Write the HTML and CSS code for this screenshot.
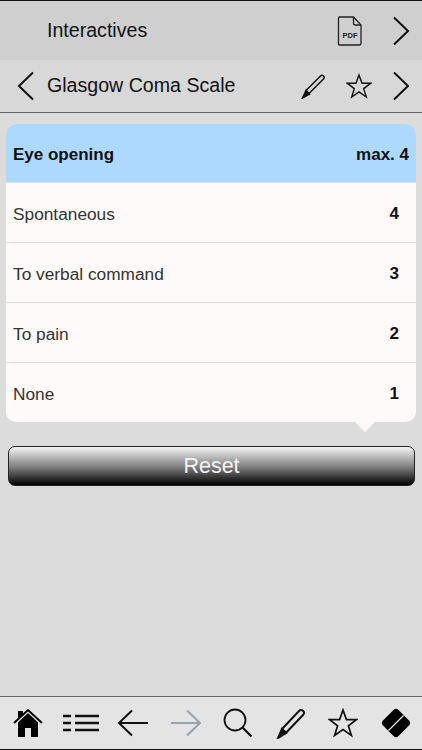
FILE: index.html
```html
<!DOCTYPE html>
<html lang="en">
<head>
  <meta charset="UTF-8">
  <meta name="viewport" content="width=device-width, initial-scale=1.0">
  <title>Glasgow Coma Scale</title>
  <link rel="stylesheet" href="styles.css">
</head>
<body>
  <header class="topbar">
    <div class="bar bar-section">
      <span class="bar-title">Interactives</span>
      <svg class="icon-pdf" width="26" height="30" viewBox="0 0 26 30" fill="none" stroke="#222" stroke-width="1.3">
        <path d="M2.5 1h14l7.500 8v18q0 2-2 2h-19.500q-1 0-1-1v-26q0-1 1-1z"/>
        <path d="M16.500 1v6q0 2 2 2h5.500"/>
        <text class="pdf-label" x="13" y="22" text-anchor="middle">PDF</text>
      </svg>
      <svg class="icon-chevron" width="18" height="30" viewBox="0 0 18 30" fill="none" stroke="#111" stroke-width="2"><path d="M2 1.500l14 13.500l-14 13.500"/></svg>
    </div>
    <div class="bar bar-page">
      <svg class="icon-back" width="18" height="30" viewBox="0 0 18 30" fill="none" stroke="#111" stroke-width="2"><path d="M16 1.500l-14 13.500l14 13.500"/></svg>
      <span class="bar-title page-title">Glasgow Coma Scale</span>
      <svg class="icon-pencil" width="26" height="26" viewBox="0 0 26 26" fill="none" stroke="#111" stroke-width="1.500">
        <path d="M5 17.500l14.500-14.500q1.500-1.500 3 0t0 3l-14.500 14.500z"/>
        <path d="M5 17.500l-3.500 7.500l7-4z" fill="#111"/>
      </svg>
      <svg class="icon-star" width="26" height="26" viewBox="0 0 26 26" fill="none" stroke="#111" stroke-width="1.400"><path d="M13 2l3 8.300h8.700l-7 5.300l2.600 8.400l-7.300-5.100l-7.300 5.100l2.600-8.400l-7-5.300h8.700z"/></svg>
      <svg class="icon-chevron" width="18" height="30" viewBox="0 0 18 30" fill="none" stroke="#111" stroke-width="2"><path d="M2 1.500l14 13.500l-14 13.500"/></svg>
    </div>
  </header>

  <main class="content">
    <section class="score-card">
      <div class="score-head"><span>Eye opening</span><span>max. 4</span></div>
      <div class="score-row"><span>Spontaneous</span><b>4</b></div>
      <div class="score-row"><span>To verbal command</span><b>3</b></div>
      <div class="score-row"><span>To pain</span><b>2</b></div>
      <div class="score-row"><span>None</span><b>1</b></div>
      <div class="score-pointer"></div>
    </section>
    <button class="reset-btn">Reset</button>
  </main>

  <nav class="toolbar">
    <svg width="32" height="32" viewBox="0 0 32 32"><path d="M2 16l14-13l14 13" fill="none" stroke="#000" stroke-width="2"/><path d="M6 4h5v4l-5 5z M16 6l10 9.500v14.500h-7v-9h-6v9h-7v-14.500z" fill="#000"/></svg>
    <svg width="38" height="22" viewBox="0 0 38 22" stroke="#111" stroke-width="2.400"><path d="M1 4h8M13 4h24M1 11h8M13 11h24M1 18h8M13 18h24"/></svg>
    <svg width="32" height="28" viewBox="0 0 32 28" fill="none" stroke="#111" stroke-width="2"><path d="M31 14h-29M15 1.500l-13 12.500l13 12.500"/></svg>
    <svg width="32" height="28" viewBox="0 0 32 28" fill="none" stroke="#9aa3ab" stroke-width="2"><path d="M1 14h29M17 1.500l13 12.500l-13 12.500"/></svg>
    <svg width="30" height="30" viewBox="0 0 30 30" fill="none" stroke="#111" stroke-width="1.800"><circle cx="12" cy="12" r="10.500"/><path d="M19.500 19.500l9 9" stroke-width="2.200"/></svg>
    <svg width="30" height="32" viewBox="0 0 30 32" fill="none" stroke="#111" stroke-width="2"><path d="M6 22l17-18q2-2 4-.200t.2 4l-17.200 18z"/><path d="M6 22l-4 9l8-5z" fill="#111"/></svg>
    <svg width="30" height="30" viewBox="0 0 30 30" fill="none" stroke="#111" stroke-width="1.700"><path d="M15 2l3.400 9.600h10l-8 6.100l3 9.800l-8.400-5.900l-8.400 5.900l3-9.800l-8-6.100h10z"/></svg>
    <svg width="30" height="30" viewBox="0 0 30 30"><path d="M13 1.500q2-1.500 4 0l11.500 11.500q1.500 2 0 4l-11.500 11.500q-2 1.500-4 0l-11.500-11.500q-1.500-2 0-4z" fill="#000"/><path d="M7.500 22.500l15-15" stroke="#e4e4e4" stroke-width="1.200"/></svg>
  </nav>
</body>
</html>
```

FILE: styles.css
```css
html, body {
  height: 100%;
}

body {
  margin: 0;
  height: 750px;
  overflow: hidden;
  display: flex;
  flex-direction: column;
  font-family: "Liberation Sans", Arial, sans-serif;
  background-color: #dcdcdc;
  color: #111;
}

svg {
  display: block;
  flex-shrink: 0;
}

.topbar {
  border-top: 1px solid #111;
  border-bottom: 1px solid #666;
}

.bar {
  display: flex;
  align-items: center;
}

.bar-section {
  height: 59px;
  padding: 0 12px 0 47px;
  background-color: #cfcfcf;
}

.bar-page {
  height: 52px;
  padding: 0 12px 0 17px;
  background-color: #d8d8d8;
}

.bar-title {
  flex: 1;
  font-size: 19.600px;
}

.page-title {
  margin-left: 12px;
  padding-bottom: 2px;
}

.icon-pdf {
  margin-right: 29px;
}

.pdf-label {
  font-family: "Liberation Sans", Arial, sans-serif;
  font-size: 7.500px;
  font-weight: bold;
  fill: #222;
  stroke: none;
}

.icon-pencil {
  margin-right: 19px;
}

.icon-star {
  margin-right: 20px;
}

.content {
  flex: 1;
  padding: 11px 6px 0 6px;
}

.score-card {
  position: relative;
  background-color: #fffafa;
  border-radius: 10px;
}

.score-head {
  display: flex;
  justify-content: space-between;
  align-items: center;
  box-sizing: border-box;
  height: 58px;
  padding: 3px 7px 0;
  background-color: #add8ff;
  border-radius: 10px 10px 0 0;
  font-size: 17px;
  font-weight: bold;
}

.score-row {
  display: flex;
  justify-content: space-between;
  align-items: center;
  height: 56px;
  padding: 3px 17px 0 7px;
  border-top: 1px solid #ddd;
  font-size: 17.300px;
  color: #333;
}

.score-row:last-of-type {
  height: 54px;
}

.score-row b {
  font-size: 17px;
  color: #111;
}

.score-pointer {
  position: absolute;
  right: 40px;
  bottom: -10px;
  width: 0;
  height: 0;
  border-left: 11px solid transparent;
  border-right: 11px solid transparent;
  border-top: 11px solid #fffafa;
}

.reset-btn {
  display: block;
  width: 407px;
  height: 40px;
  margin: 24px 0 0 2px;
  padding: 0;
  border: 1px solid #222;
  border-radius: 7px;
  background: linear-gradient(#f4f4f4, #808080 52%, #000 100%);
  color: #f4f4f4;
  font-family: inherit;
  font-size: 21.500px;
}

.toolbar {
  display: grid;
  grid-template-columns: repeat(8, 1fr);
  justify-items: center;
  align-items: center;
  height: 52px;
  padding: 0 0 0 2px;
  background-color: #e4e4e4;
  border-top: 1px solid #666;
  border-bottom: 1px solid #111;
}
```
